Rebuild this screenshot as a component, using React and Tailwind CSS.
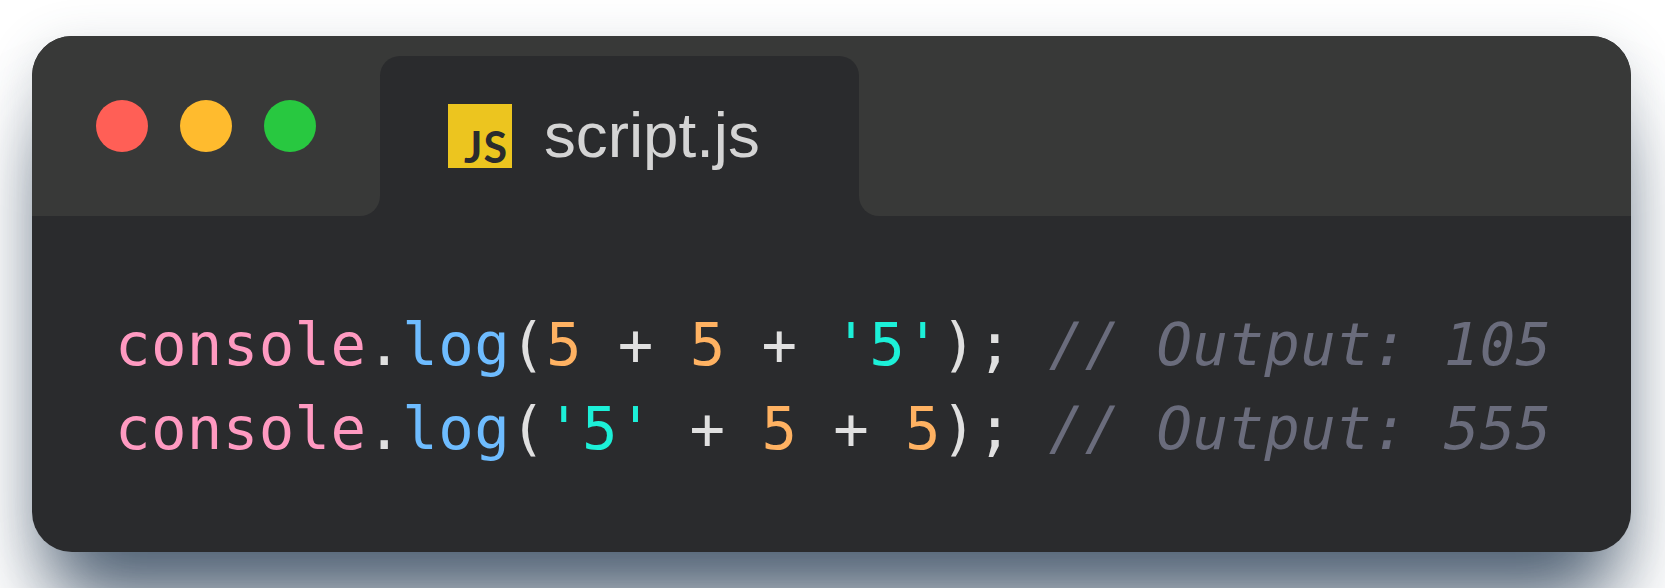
import React from 'react';

const Line = ({ first, second, third, output }) => (
  <div className="whitespace-pre">
    <span className="text-[#ff9ac1]">console</span>
    <span className="text-[#e0e0e0]">.</span>
    <span className="text-[#6ebcff]">log</span>
    <span className="text-[#e0e0e0]">(</span>
    {first}
    <span className="text-[#e0e0e0]"> + </span>
    {second}
    <span className="text-[#e0e0e0]"> + </span>
    {third}
    <span className="text-[#e0e0e0]">); </span>
    <span className="italic text-[#6a6c7c]">// Output: {output}</span>
  </div>
);

const Num = ({ children }) => <span className="text-[#ffb262]">{children}</span>;
const Str = ({ children }) => <span className="text-[#1cf0d8]">{children}</span>;

const App = () => {
  return (
    <div className="h-[588px] w-[1665px] overflow-hidden bg-white pt-9 pl-8">
      <div className="w-[1599px] h-[516px] rounded-[40px] bg-[#2a2b2d] shadow-[0_70px_80px_-20px_rgba(62,81,102,0.9),0_10px_50px_rgba(62,81,102,0.2)] overflow-hidden">
        <div className="flex h-[180px]">
          <div className="flex w-[348px] items-center gap-8 rounded-br-[20px] bg-[#383938] pl-16">
            <div className="h-[52px] w-[52px] rounded-full bg-[#ff5f56]" />
            <div className="h-[52px] w-[52px] rounded-full bg-[#ffbb2e]" />
            <div className="h-[52px] w-[52px] rounded-full bg-[#28c840]" />
          </div>
          <div className="w-[479px] bg-[#383938]">
            <div className="mt-5 flex h-[160px] items-start rounded-t-[20px] bg-[#2a2b2d] pl-[68px] pt-[48px]">
              <div className="flex h-16 w-16 items-end justify-end bg-[#ecc51f] pr-[4px] font-['Lato',sans-serif] text-[43px] font-bold leading-[42px] tracking-[1px] text-[#2a2b2d]">
                JS
              </div>
              <span className="ml-8 -mt-px font-['Liberation_Sans',sans-serif] text-[63.7px] leading-[64px] text-[#d4d4d4]">script.js</span>
            </div>
          </div>
          <div className="flex-1 rounded-bl-[20px] bg-[#383938]" />
        </div>
        <div className="pt-[87px] pl-[83px] font-['DejaVu_Sans_Mono',monospace] text-[59px] leading-[84px] tracking-[0.39px]">
          <Line first={<Num>5</Num>} second={<Num>5</Num>} third={<Str>'5'</Str>} output="105" />
          <Line first={<Str>'5'</Str>} second={<Num>5</Num>} third={<Num>5</Num>} output="555" />
        </div>
      </div>
    </div>
  );
};

export default App;
